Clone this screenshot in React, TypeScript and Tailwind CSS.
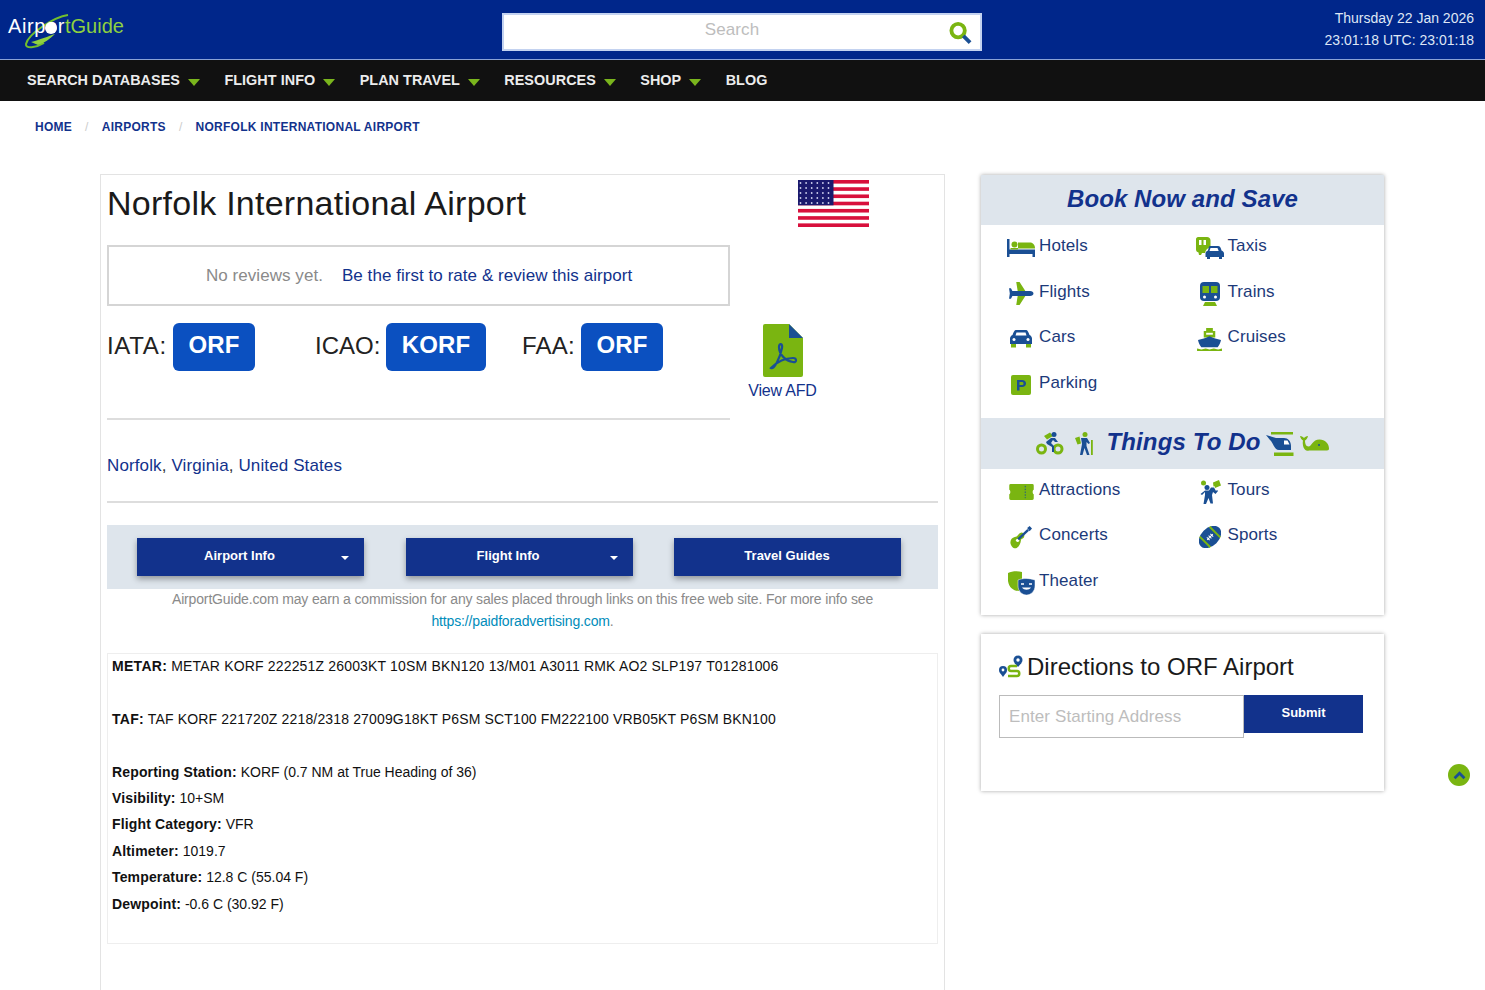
import React from 'react'

const G = '#7ab511'
const B = '#1a4f94'

function Hotels() {
  return (
    <svg viewBox="0 0 28 18" className="w-7 h-[18px]">
      <path d="M0 0h2.5v10.500H28V18h-2.500v-3H2.500v3H0z" fill={B} />
      <circle cx="7.500" cy="5.500" r="3" fill={G} />
      <path d="M11 3.500h12c3 0 5 2.500 5 6H11z" fill={G} />
      <path d="M3.500 9h7.500v1.500H3.500z" fill={G} />
    </svg>
  )
}

function Taxis() {
  return (
    <svg viewBox="0 0 28 22" className="w-7 h-[22px]">
      <path d="M2 0h9c2 0 3.500 1.500 3.500 3.500V10c-3 1-5 3-5.500 6H6l-1 2H3l-.5-2.500C1 15 0 14 0 12.500V2C0 1 1 0 2 0z" fill={G} />
      <path d="M3 3h2.500v5H3zM7.500 3H10v5H7.500z" fill="#fff" />
      <path d="M14 9h8c2 0 3 2 3.500 4.500 1.500.5 2.500 1.500 2.500 3V20h-2v2h-3v-2H14v2h-3v-2H9.500v-3.500c0-1.500 1-2.500 2.500-3C12.500 11 13 9 14 9z" fill={B} />
      <path d="M14.500 11h7l1.200 3H13.500z" fill="#fff" />
    </svg>
  )
}

function Flights() {
  return (
    <svg viewBox="0 0 26 24" className="w-[25px] h-[23px]">
      <path d="M7.500 0h3.500l6 9.500H9zM9 14.500h8L11 24H7.500z" fill={G} />
      <path d="M0 6.500h2L3.500 9.500H22c2 0 3.500 1.200 3.500 2.500S24 14.500 22 14.500H3.500L2 17.500H0l.8-5.500z" fill={B} />
    </svg>
  )
}

function Trains() {
  return (
    <svg viewBox="0 0 20 24" className="w-5 h-6">
      <rect x="0" y="0" width="20" height="19" rx="4" fill={B} />
      <rect x="2.500" y="4" width="6.500" height="7" fill={G} />
      <rect x="11" y="4" width="6.500" height="7" fill={G} />
      <circle cx="4.500" cy="15" r="1.500" fill="#fff" />
      <circle cx="15.500" cy="15" r="1.500" fill="#fff" />
      <path d="M5 20h10l2 4H3z" fill={G} />
    </svg>
  )
}

function Cars() {
  return (
    <svg viewBox="0 0 22 20" className="w-[22px] h-5">
      <path d="M6 1h10c1.500 0 2.500 2 3.500 5 1.500.5 2.500 2 2.500 3.500V15H0V9.500C0 8 1 6.500 2.500 6 3.500 3 4.500 1 6 1z" fill={B} />
      <path d="M6.500 3.500h9l1 3h-11z" fill="#fff" />
      <path d="M1 15h5v3.500H1zM16 15h5v3.500h-5z" fill={G} />
      <circle cx="4" cy="10.500" r="1.500" fill="#fff" />
      <circle cx="18" cy="10.500" r="1.500" fill="#fff" />
    </svg>
  )
}

function Cruises() {
  return (
    <svg viewBox="0 0 26 24" className="w-[25px] h-[23px]">
      <path d="M9.500 0h7v3h2.500v7H7V3h2.500z" fill={G} />
      <path d="M9.500 5h7v2h-7z" fill="#fff" />
      <path d="M1 12.500C5 11.500 9 10.500 13 8.500c4 2 8 3 12 4-.5 3-2 5.500-3.500 7.500h-17C3 18 1.500 15.500 1 12.500z" fill={B} />
      <path d="M0 21.500c2 0 2.500 1 4.500 1s2.500-1 4.500-1 2.500 1 4 1 2.500-1 4.500-1 2.500 1 4.500 1 2-1 4-1V24H0z" fill={G} />
    </svg>
  )
}

function Parking() {
  return (
    <svg viewBox="0 0 20 20" className="w-5 h-5">
      <rect width="20" height="20" rx="2" fill={G} />
      <path d="M6 5h5c2.500 0 4 1.500 4 3.500S13.500 12 11 12H8.500v3.500H6zM8.500 7v3H11c1 0 1.500-.5 1.500-1.500S12 7 11 7z" fill={B} />
    </svg>
  )
}

function Bike() {
  return (
    <svg viewBox="0 0 28 23" className="w-7 h-[23px] shrink-0">
      <circle cx="5.500" cy="17" r="4" fill="none" stroke={G} strokeWidth="3" />
      <circle cx="22" cy="17" r="4" fill="none" stroke={G} strokeWidth="3" />
      <path d="M8 4l6-3.500 3 3.500-6 3.500z" fill={G} />
      <circle cx="18" cy="2.500" r="2.500" fill={B} />
      <path d="M10 10l5-4h4l3 4h-3l-2-2-2 3 3 3v6h-2v-5l-5-3z" fill={B} />
    </svg>
  )
}

function Hiker() {
  return (
    <svg viewBox="0 0 18 23" className="w-[18px] h-[23px] shrink-0">
      <circle cx="10" cy="2.500" r="2.500" fill={G} />
      <path d="M0 6l4.500-1.500 1.500 7-3.500 1zM16 8h1.800v15H16z" fill={G} />
      <path d="M6 6h6l3 5-1.500 1-2-2v4l3 9h-2.500l-2.500-7-2 7H5l2-11z" fill={B} />
    </svg>
  )
}

function Helicopter() {
  return (
    <svg viewBox="0 0 28 24" className="w-7 h-6 shrink-0">
      <path d="M5 0h22v2.500H5z" fill={G} />
      <path d="M8 20.500h19.500V24H8z" fill={G} />
      <path d="M0 3l10 3h8c4 0 7 3 7 8v4H13C8 18 7 10 4 8z" fill={B} />
      <path d="M18 8.500h3.500l2 4H18z" fill="#fff" />
    </svg>
  )
}

function Whale() {
  return (
    <svg viewBox="0 0 29 17" className="w-[29px] h-[17px] shrink-0">
      <path d="M0 1c2 0 3 1 4 2 1-1 2-2 4-2-.5 2.500-2 4-3 4.500 0 3 1 6 3.500 6 3 0 4-7 11-7 5.500 0 9.500 4 9.500 9 0 1-.5 2-2 2H9C4 17 2 10 3 5.500 1.500 5 .5 3 0 1z" fill={G} />
      <circle cx="19" cy="10" r="1" fill={B} />
    </svg>
  )
}

function Ticket() {
  return (
    <svg viewBox="0 0 26 17" className="w-[25px] h-4">
      <path d="M1.500 0h23A1.500 1.500 0 0 1 26 1.500V6c-1.500.5-1.500 4.500 0 5v4.500a1.500 1.500 0 0 1-1.500 1.500h-23A1.500 1.500 0 0 1 0 15.500V11c1.500-.5 1.500-4.500 0-5V1.500A1.500 1.500 0 0 1 1.500 0z" fill={G} />
      <path d="M17 2v13" stroke={B} strokeWidth="1" strokeDasharray="1.500 1.500" />
    </svg>
  )
}

function Guide() {
  return (
    <svg viewBox="0 0 22 24" className="w-[22px] h-6">
      <circle cx="4.500" cy="3" r="2.500" fill={G} />
      <circle cx="8" cy="7.500" r="2.500" fill={B} />
      <path d="M12 7.500h3l2 3.500 1-1 1 1-2.500 3-2.500-2-1 3 1 8.500h-2.500L9.500 18 7 24H4.500L6 15v-3l-3 3-1.500-1L6 10.500h4z" fill={B} />
      <path d="M14 2.500L20 0l2 5.500-6 2.500-.5-2-1 .5z" fill={G} />
    </svg>
  )
}

function Guitar() {
  return (
    <svg viewBox="0 0 23 24" className="w-[22px] h-[23px]">
      <path d="M13 7c2 1 2.500 3 1.500 5-1 1.500-2.500 1-3 2.500C11 18 10 21 7 23c-3 1.500-6-2-6.500-5S2 12 5 11.500c1.500-.2 2.500-1 3.500-2 1-1.500 3-3 4.500-2.500z" fill={G} />
      <circle cx="8" cy="15" r="1.800" fill="#fff" />
      <path d="M8.500 14L19 4" stroke={B} strokeWidth="2.500" />
      <path d="M18 2l2.500-2L23 2.500 20.500 5.500z" fill={B} />
    </svg>
  )
}

function Football() {
  return (
    <svg viewBox="0 0 22 22" className="w-[22px] h-[22px]">
      <g transform="rotate(-45 11 11)">
        <ellipse cx="11" cy="11" rx="13" ry="9" fill={B} />
        <path d="M4 3.500v15M18 3.500v15" stroke={G} strokeWidth="2" />
        <path d="M7 11h8M8.500 9v4M11 9v4M13.500 9v4" stroke="#fff" strokeWidth="1" fill="none" />
      </g>
    </svg>
  )
}

function Masks() {
  return (
    <svg viewBox="0 0 28 24" className="w-7 h-6">
      <path d="M1 2c4-2 10-2 14-1v8c-2 3-3 9-3 11-5 0-10-3-11-10z" fill={G} />
      <path d="M11 9c5-2 11-2 17 0v6c0 5-4 9-8.500 9S11 20 11 15z" fill={B} stroke="#fff" strokeWidth="0.500" />
      <path d="M14 13l3 0M22 13l3 0" stroke="#fff" strokeWidth="1.500" />
      <path d="M15 16.500c2 3 7 3 9 0z" fill="#fff" />
    </svg>
  )
}

function Route() {
  return (
    <svg viewBox="0 0 24 24" className="w-6 h-6">
      <circle cx="19" cy="5" r="4.500" fill={B} />
      <circle cx="19" cy="5" r="1.700" fill="#fff" />
      <path d="M15.500 8l3.500 4 3.500-4z" fill={B} />
      <circle cx="4" cy="15" r="4" fill={B} />
      <circle cx="4" cy="15" r="1.400" fill="#fff" />
      <path d="M.8 17.500L4 22l3.200-4.500z" fill={B} />
      <path d="M18 11h-6c-3 0-3 5 0 5h6c3 0 3 5 0 5H9" fill="none" stroke={G} strokeWidth="2.500" />
    </svg>
  )
}

function Pdf() {
  return (
    <svg viewBox="0 0 40 53" className="w-10 h-[53px] block">
      <path d="M2 0h24l14 14v37a2 2 0 0 1-2 2H2a2 2 0 0 1-2-2V2a2 2 0 0 1 2-2z" fill={G} />
      <path d="M26 0l14 14H26z" fill={B} />
      <path d="M8 44c3 2 9-10 11-20 1-5-3-5-3-1 0 8 7 14 14 15 4 1 4-4 0-4-8 0-16 4-22 10z" fill="none" stroke={B} strokeWidth="2.200" />
    </svg>
  )
}

function Flag() {
  const stripes = [0, 1, 2, 3, 4, 5, 6]
  const dots = []
  for (let r = 0; r < 5; r++) {
    for (let c = 0; c < 6; c++) {
      dots.push(<circle key={r + '-' + c} cx={2.500 + c * 5.600} cy={3 + r * 5} r="0.900" fill="#cfd0ee" />)
    }
  }
  return (
    <svg viewBox="0 0 71 47" className="w-[71px] h-[47px] block">
      <rect width="71" height="47" fill="#fff" />
      {stripes.map((s) => (
        <rect key={s} y={s * 7.230} width="71" height="3.620" fill="#d8103c" />
      ))}
      <rect width="35.500" height="25.300" fill="#1b1a6e" />
      {dots}
    </svg>
  )
}

function Logo() {
  return (
    <div className="relative w-[125px] h-[50px]">
      <svg viewBox="0 0 60 40" className="absolute left-[20px] top-[10px] w-[60px] h-[40px]">
        <path d="M48 3C34 5 8 22 6 32c-1 5 10 4 18-1" fill="none" stroke="#72c02c" strokeWidth="2" />
        <path d="M11 30c8-2 18-6 24-8-5 5-11 9-17 11z" fill="#8ed13f" />
      </svg>
      <div className="absolute left-[8px] top-[10px] text-[20px] leading-[28px] whitespace-nowrap">
        <span className="text-white tracking-[0.600px]">Airpor</span>
        <span className="text-[#8ed13f]">tGuide</span>
      </div>
      <span className="absolute left-[45px] top-[20px] w-[12px] h-[12px] rounded-full bg-white" />
    </div>
  )
}

function Caret() {
  return <span className="w-0 h-0 border-x-[6.500px] border-x-transparent border-t-[7px] border-t-[#7ab51d] mt-[3px]" />
}

function MenuItem({ label, caret }: { label: string; caret?: boolean }) {
  return (
    <div className="flex items-center gap-[8px] text-[#ececec] text-[14.400px] tracking-[0.050px] font-bold whitespace-nowrap">
      {label}
      {caret && <Caret />}
    </div>
  )
}

function LinkRow({ items }: { items: { icon: React.ReactNode; label: string }[] }) {
  return (
    <div className="grid grid-cols-2 pl-[26px] gap-y-[17.700px]">
      {items.map((it) => (
        <div key={it.label} className="flex items-center h-[28px] w-[188px]">
          <div className="w-[32px] h-[28px] flex items-center justify-center pr-[4px] mt-[2px]">{it.icon}</div>
          <span className="text-[17px] tracking-[0.100px] text-[#1c3a7a] leading-[28px] -mt-[2px]">{it.label}</span>
        </div>
      ))}
    </div>
  )
}

function Code({ label, code, labelW, w, col, track }: { label: string; code: string; labelW: string; w: string; col: string; track: string }) {
  return (
    <div className={`flex items-center ${col}`}>
      <span className={`${labelW} ${track} text-[24px] text-[#222] pb-[3px]`}>{label}</span>
      <span className={`${w} h-[48px] rounded-[6px] bg-[#0b50c0] text-white font-bold text-[24px] tracking-[0.100px] flex items-center justify-center pb-[4px]`}>
        {code}
      </span>
    </div>
  )
}

function BarButton({ label, caret }: { label: string; caret?: boolean }) {
  return (
    <div className="relative w-[227px] h-[38px] bg-[#12328c] shadow-[0_3px_6px_rgba(0,0,0,0.35)] text-white text-[13px] font-bold flex items-center justify-center pb-[3px]">
      <span className={caret ? 'pr-[22px]' : 'pr-[1px]'}>{label}</span>
      {caret && (
        <span className="absolute right-[15px] top-[18px] w-0 h-0 border-x-[4px] border-x-transparent border-t-[4px] border-t-white" />
      )}
    </div>
  )
}

function Line({ label, value }: { label: string; value: string }) {
  return (
    <div className="h-[26.400px] leading-[26.400px]">
      <b className="tracking-[0.150px]">{label}</b> {value}
    </div>
  )
}

const book = [
  { icon: <Hotels />, label: 'Hotels' },
  { icon: <Taxis />, label: 'Taxis' },
  { icon: <Flights />, label: 'Flights' },
  { icon: <Trains />, label: 'Trains' },
  { icon: <Cars />, label: 'Cars' },
  { icon: <Cruises />, label: 'Cruises' },
  { icon: <Parking />, label: 'Parking' },
]

const todo = [
  { icon: <Ticket />, label: 'Attractions' },
  { icon: <Guide />, label: 'Tours' },
  { icon: <Guitar />, label: 'Concerts' },
  { icon: <Football />, label: 'Sports' },
  { icon: <Masks />, label: 'Theater' },
]

export default function App() {
  return (
    <div className="relative h-[990px] overflow-hidden bg-white font-['Liberation_Sans',Arial,sans-serif]">
      {/* Header */}
      <header className="h-[60px] bg-[#00268a] border-b border-b-[#8aa2d6] flex items-start">
        <div className="w-[502px] pt-[2px]">
          <Logo />
        </div>
        <div className="mt-[13px] w-[480px] h-[38px] bg-white border-2 border-[#c3d2f0] flex items-center relative">
          <span className="w-[456px] text-center text-[17px] tracking-[0.100px] text-[#bdbdbd] -mt-[4px]">Search</span>
          <svg viewBox="0 0 24 24" className="absolute right-[8px] top-[6px] w-[23px] h-[24px]">
            <circle cx="9.500" cy="9.500" r="7" fill="none" stroke={G} strokeWidth="4" />
            <path d="M15 15l7 7" stroke={B} strokeWidth="4" />
          </svg>
        </div>
        <div className="flex-1 pr-[11px] pt-[7px] text-right text-[14px] leading-[22px] text-[#dfe6f5]">
          <div>Thursday 22 Jan 2026</div>
          <div>23:01:18 UTC: 23:01:18</div>
        </div>
      </header>

      {/* Nav */}
      <nav className="h-[41px] bg-[#111] pl-[27px] flex items-center gap-[24.400px] pt-[1px]">
        <MenuItem label="SEARCH DATABASES" caret />
        <MenuItem label="FLIGHT INFO" caret />
        <MenuItem label="PLAN TRAVEL" caret />
        <MenuItem label="RESOURCES" caret />
        <MenuItem label="SHOP" caret />
        <MenuItem label="BLOG" />
      </nav>

      {/* Breadcrumbs */}
      <div className="h-[73px] pl-[35px] pt-[18px] flex items-start text-[12px] tracking-[0.270px] font-bold text-[#12328c] leading-[16px]">
        <span>HOME</span>
        <span className="mx-[13px] font-normal text-[#ccc]">/</span>
        <span>AIRPORTS</span>
        <span className="mx-[13px] font-normal text-[#ccc]">/</span>
        <span>NORFOLK INTERNATIONAL AIRPORT</span>
      </div>

      <div className="flex items-start pl-[100px]">
        {/* Main panel */}
        <main className="w-[845px] h-[830px] border border-[#e3e3e3] px-[6px] shrink-0">
          <div className="flex">
            <div className="w-[623px]">
              <h1 className="text-[34px] tracking-[0.250px] leading-[44px] text-[#1a1a1a] mt-[6px]">Norfolk International Airport</h1>
              <div className="mt-[20px] h-[61px] border-2 border-[#d5d5d5] flex items-center pl-[97px] text-[17px] tracking-[0.050px]">
                <span className="text-[#8a8a8a]">No reviews yet.</span>
                <span className="ml-[19px] text-[#12328c]">Be the first to rate &amp; review this airport</span>
              </div>
              <div className="mt-[17px] h-[48px] flex">
                <Code label="IATA:" code="ORF" labelW="w-[66px]" track="tracking-[0.700px]" w="w-[82px]" col="w-[208px]" />
                <Code label="ICAO:" code="KORF" labelW="w-[71px]" track="" w="w-[100px]" col="w-[207px]" />
                <Code label="FAA:" code="ORF" labelW="w-[59px]" track="tracking-[0.200px]" w="w-[82px]" col="" />
              </div>
              <div className="mt-[47px] border-t-2 border-t-[#ddd]" />
            </div>
            <div className="w-[208px] relative">
              <div className="ml-[68px] mt-[5px]">
                <Flag />
              </div>
              <div className="mt-[97px] w-[105px] flex flex-col items-center">
                <Pdf />
                <span className="text-[16px] tracking-[-0.200px] leading-[28px] text-[#12328c]">View AFD</span>
              </div>
            </div>
          </div>

          <div className="mt-[33px] text-[17px] tracking-[0.120px] leading-[26px] text-[#12328c]">
            Norfolk<span className="text-[#333]">, </span>Virginia<span className="text-[#333]">, </span>United States
          </div>
          <div className="mt-[22px] border-t-2 border-t-[#ddd]" />

          <div className="mt-[22px] h-[64px] bg-[#dee5ec] pt-[13px] pl-[30px] flex gap-[41.500px]">
            <BarButton label="Airport Info" caret />
            <BarButton label="Flight Info" caret />
            <BarButton label="Travel Guides" />
          </div>

          <p className="mt-[-2px] w-[831px] text-center text-[14px] tracking-[-0.150px] leading-[22px] text-[#8a8a8a] px-[60px] pt-[1px]">
            AirportGuide.com may earn a commission for any sales placed through links on this free web site. For more info see <span className="text-[#008cba]">https://paidforadvertising.com</span>.
          </p>

          <div className="mt-[21px] h-[291px] border border-[#eee] px-[4px] text-[14px] text-[#111]">
            <div className="-mt-[1px] h-[26.400px] leading-[26.400px] tracking-[0.170px]">
              <b className="tracking-[0.300px]">METAR:</b> METAR KORF 222251Z 26003KT 10SM BKN120 13/M01 A3011 RMK AO2 SLP197 T01281006
            </div>
            <div className="mt-[26.400px] h-[26.400px] leading-[26.400px] tracking-[0.150px]">
              <b className="tracking-[0.300px]">TAF:</b> TAF KORF 221720Z 2218/2318 27009G18KT P6SM SCT100 FM222100 VRB05KT P6SM BKN100
            </div>
            <div className="mt-[26.400px]">
              <Line label="Reporting Station:" value="KORF (0.7 NM at True Heading of 36)" />
              <Line label="Visibility:" value="10+SM" />
              <Line label="Flight Category:" value="VFR" />
              <Line label="Altimeter:" value="1019.7" />
              <Line label="Temperature:" value="12.8 C (55.04 F)" />
              <Line label="Dewpoint:" value="-0.6 C (30.92 F)" />
            </div>
          </div>
        </main>

        {/* Sidebar */}
        <aside className="ml-[35px] w-[405px] shrink-0">
          <section className="h-[440px] bg-white shadow-[0_0_4px_rgba(0,0,0,0.35)] mx-[1px] mt-[1px]">
            <h2 className="h-[50px] bg-[#dee5ec] text-center text-[24px] tracking-[0.100px] font-bold italic text-[#12328c] leading-[48px]">
              Book Now and Save
            </h2>
            <div className="pt-[8px] h-[193px]">
              <LinkRow items={book} />
            </div>
            <div className="h-[51px] bg-[#dee5ec] flex items-center justify-center text-[24px] tracking-[0.150px] font-bold italic text-[#12328c]">
              <Bike />
              <span className="w-[11px]" />
              <Hiker />
              <span className="w-[13px]" />
              <span className="pb-[3px] whitespace-nowrap">Things To Do</span>
              <span className="w-[5px]" />
              <Helicopter />
              <span className="w-[6px]" />
              <Whale />
            </div>
            <div className="pt-[7.500px]">
              <LinkRow items={todo} />
            </div>
          </section>

          <section className="mt-[19px] h-[157px] bg-white shadow-[0_0_4px_rgba(0,0,0,0.35)] mx-[1px] pl-[18px] pt-[17px]">
            <div className="flex items-center h-[32px]">
              <Route />
              <span className="ml-[4px] text-[24px] text-[#1a1a1a] whitespace-nowrap">Directions to ORF Airport</span>
            </div>
            <div className="mt-[12px] flex items-start">
              <div className="w-[245px] h-[43px] border border-[#bbb] pl-[9px] text-[17px] tracking-[0.100px] text-[#bdbdbd] flex items-center">
                Enter Starting Address
              </div>
              <div className="w-[119px] h-[38px] bg-[#12328c] text-white text-[13px] font-bold flex items-center justify-center pb-[3px]">
                Submit
              </div>
            </div>
          </section>
        </aside>
      </div>

      {/* Scroll to top */}
      <div className="absolute left-[1448px] top-[764px] w-[22px] h-[22px] rounded-full bg-[#7ab511] flex items-center justify-center">
        <svg viewBox="0 0 14 10" className="w-[13px] h-[9px]">
          <path d="M1.500 8L7 2.500 12.500 8" fill="none" stroke={B} strokeWidth="3" />
        </svg>
      </div>
    </div>
  )
}
